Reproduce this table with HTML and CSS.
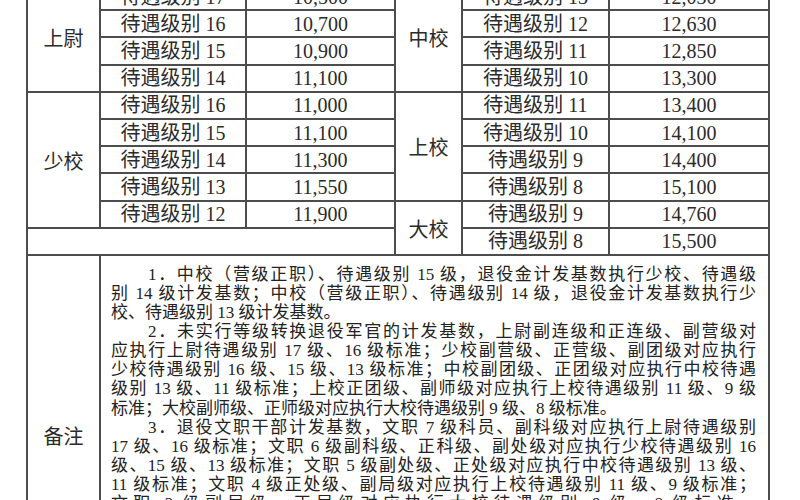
FILE: index.html
```html
<!DOCTYPE html>
<html lang="zh-CN">
<head>
<meta charset="utf-8">
<title>退役金计发基数</title>
<link rel="stylesheet" href="styles.css">
</head>
<body>
<div class="page">
<table class="grid">
<colgroup>
<col class="c1"><col class="c2"><col class="c3"><col class="c4"><col class="c5"><col class="c6">
</colgroup>
<tbody>
<tr><td class="rank" rowspan="4">上尉</td><td>待遇级别 17</td><td>10,500</td><td class="rank" rowspan="4">中校</td><td>待遇级别 13</td><td>12,030</td></tr>
<tr><td>待遇级别 16</td><td>10,700</td><td>待遇级别 12</td><td>12,630</td></tr>
<tr><td>待遇级别 15</td><td>10,900</td><td>待遇级别 11</td><td>12,850</td></tr>
<tr><td>待遇级别 14</td><td>11,100</td><td>待遇级别 10</td><td>13,300</td></tr>
<tr><td class="rank" rowspan="5">少校</td><td>待遇级别 16</td><td>11,000</td><td class="rank" rowspan="4">上校</td><td>待遇级别 11</td><td>13,400</td></tr>
<tr><td>待遇级别 15</td><td>11,100</td><td>待遇级别 10</td><td>14,100</td></tr>
<tr><td>待遇级别 14</td><td>11,300</td><td>待遇级别 9</td><td>14,400</td></tr>
<tr><td>待遇级别 13</td><td>11,550</td><td>待遇级别 8</td><td>15,100</td></tr>
<tr><td>待遇级别 12</td><td>11,900</td><td class="rank" rowspan="2">大校</td><td>待遇级别 9</td><td>14,760</td></tr>
<tr><td colspan="3"></td><td>待遇级别 8</td><td>15,500</td></tr>
<tr><td class="label">备注</td><td class="notes" colspan="5">
<div class="ln first">1．中校（营级正职）、待遇级别 15 级，退役金计发基数执行少校、待遇级</div>
<div class="ln">别 14 级计发基数；中校（营级正职）、待遇级别 14 级，退役金计发基数执行少</div>
<div class="ln end">校、待遇级别 13 级计发基数。</div>
<div class="ln first">2．未实行等级转换退役军官的计发基数，上尉副连级和正连级、副营级对</div>
<div class="ln">应执行上尉待遇级别 17 级、16 级标准；少校副营级、正营级、副团级对应执行</div>
<div class="ln">少校待遇级别 16 级、15 级、13 级标准；中校副团级、正团级对应执行中校待遇</div>
<div class="ln">级别 13 级、11 级标准；上校正团级、副师级对应执行上校待遇级别 11 级、9 级</div>
<div class="ln end">标准；大校副师级、正师级对应执行大校待遇级别 9 级、8 级标准。</div>
<div class="ln first">3．退役文职干部计发基数，文职 7 级科员、副科级对应执行上尉待遇级别</div>
<div class="ln">17 级、16 级标准；文职 6 级副科级、正科级、副处级对应执行少校待遇级别 16</div>
<div class="ln">级、15 级、13 级标准；文职 5 级副处级、正处级对应执行中校待遇级别 13 级、</div>
<div class="ln">11 级标准；文职 4 级正处级、副局级对应执行上校待遇级别 11 级、9 级标准；</div>
<div class="ln">文职 3 级副局级、正局级对应执行大校待遇级别 9 级、8 级标准。</div>
</td></tr>
</tbody>
</table>
</div>
</body>
</html>
```

FILE: styles.css
```css
html, body {
  margin: 0;
  padding: 0;
  background: #ffffff;
  overflow: hidden;
}

.page {
  padding-left: 26px;
}

.grid {
  border-collapse: collapse;
  table-layout: fixed;
  width: 744px;
  margin-top: -18px;
  font-family: "Liberation Serif", "Noto Sans CJK SC", serif;
  font-size: 20px;
  color: #2b2b2b;
}

.c1 { width: 73px; }
.c2 { width: 146px; }
.c3 { width: 149px; }
.c4 { width: 67px; }
.c5 { width: 147px; }
.c6 { width: 160px; }

.grid td {
  border: 2px solid #4d4d4d;
  height: 25.2px;
  padding: 0;
  text-align: center;
  vertical-align: middle;
  line-height: 20px;
  white-space: nowrap;
}

.grid td.rank {
  padding-top: 4px;
}

.grid td.label {
  height: 362px;
  padding-top: 0;
}

.grid td.notes {
  text-align: left;
  vertical-align: top;
  padding: 9px 12px 0 10px;
  font-size: 17px;
  line-height: 19.1px;
  white-space: normal;
  color: #222222;
}

.ln {
  text-align: justify;
  text-align-last: justify;
}

.ln.first {
  text-indent: 37px;
}

.ln.end {
  text-align-last: left;
}
```
